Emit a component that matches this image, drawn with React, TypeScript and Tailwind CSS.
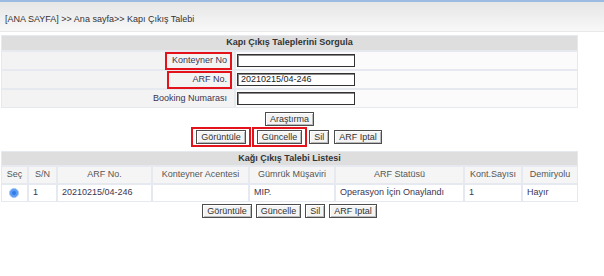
import React from "react";

const font = { fontFamily: '"Liberation Sans", Arial, sans-serif' };

function Btn({ children }: { children: React.ReactNode }) {
  return (
    <button
      type="button"
      className="h-[14px] px-[4px] leading-[12px] text-[9px] text-[#333] bg-[#f4f4f4] border border-[#4d4d4d] shadow-[inset_1px_1px_0_#fff,inset_-1px_-1px_0_#bbb]"
    >
      {children}
    </button>
  );
}

function Boxed({ children }: { children: React.ReactNode }) {
  return (
    <div className="flex items-center justify-center h-[20px] px-[3px] border-2 border-[#e3121b]">
      {children}
    </div>
  );
}

function Field({ value = "" }: { value?: string }) {
  return (
    <div className="w-[118px] h-[13px] border border-[#333] shadow-[inset_1px_1px_0_#888] bg-white pl-[3px] text-[9px] leading-[11px] text-[#222]">
      {value}
    </div>
  );
}

const searchRows = [
  { label: "Konteyner No", value: "", boxed: true },
  { label: "ARF No.", value: "20210215/04-246", boxed: true },
  { label: "Booking Numarası", value: "", boxed: false },
];

const columns = [
  { title: "Seç", w: "w-[25px]" },
  { title: "S/N", w: "w-[27px]" },
  { title: "ARF No.", w: "w-[93px]" },
  { title: "Konteyner Acentesi", w: "w-[95px]" },
  { title: "Gümrük Müşaviri", w: "w-[84px]" },
  { title: "ARF Statüsü", w: "w-[127px]" },
  { title: "Kont.Sayısı", w: "w-[56px]" },
  { title: "Demiryolu", w: "w-[54px]" },
];

const row = ["", "1", "20210215/04-246", "", "MIP.", "Operasyon İçin Onaylandı", "1", "Hayır"];

export default function App() {
  return (
    <div className="w-[604px] h-[276px] bg-white overflow-hidden" style={font}>
      {/* breadcrumb bar */}
      <div className="h-[32px] border-t-2 border-[#9bbbe3] bg-gradient-to-b from-[#e6e6e6] to-[#f8f8f8] border-b border-b-[#e9e9e9] flex items-end pb-[5px] pl-[5px]">
        <span className="text-[9px] text-[#333]">[ANA SAYFA] &gt;&gt; Ana sayfa&gt;&gt; Kapı Çıkış Talebi</span>
      </div>

      <div className="ml-[1px] w-[577px]">
        {/* search table */}
        <div className="mt-[3px] bg-[#e6e9ef] p-[1px] flex flex-col gap-[2px]">
          <div className="h-[14px] bg-[#dedede] flex items-center justify-center text-[9px] font-bold text-[#333]">
            Kapı Çıkış Taleplerini Sorgula
          </div>
          {searchRows.map((r) => (
            <div key={r.label} className="flex gap-[2px] h-[17px]">
              <div className="w-[232px] bg-[#f3f3f3] flex items-center justify-end pr-[2px]">
                <div
                  className={
                    r.boxed
                      ? "h-[18px] pl-[5px] pr-[3px] border-2 border-[#e3121b] flex items-center text-[9px] text-[#3b3552] min-w-[65px] justify-end"
                      : "pr-[5px] text-[9px] text-[#3b3552]"
                  }
                >
                  {r.label}
                </div>
              </div>
              <div className="flex-1 bg-[#fbfbfb] flex items-center pl-[1px]">
                <Field value={r.value} />
              </div>
            </div>
          ))}
        </div>

        {/* search button */}
        <div className="flex justify-center mt-[4px]">
          <Btn>Araştırma</Btn>
        </div>

        {/* action buttons */}
        <div className="flex justify-center items-center mt-[1px] pr-[6px]">
          <Boxed>
            <Btn>Görüntüle</Btn>
          </Boxed>
          <div className="w-[1px]" />
          <Boxed>
            <Btn>Güncelle</Btn>
          </Boxed>
          <div className="w-[2px]" />
          <Btn>Sil</Btn>
          <div className="w-[5px]" />
          <Btn>ARF Iptal</Btn>
        </div>

        {/* list table */}
        <div className="mt-[4px] bg-[#e6e9ef] p-[1px] flex flex-col gap-[2px]">
          <div className="h-[13px] bg-[#dedede] flex items-center justify-center text-[9px] font-bold text-[#333]">
            Kağı Çıkış Talebi Listesi
          </div>
          <div className="flex gap-[2px] h-[16px]">
            {columns.map((c) => (
              <div
                key={c.title}
                className={`${c.w} shrink-0 bg-[#f5f5f5] flex items-center justify-center text-[9px] text-[#555]`}
              >
                {c.title}
              </div>
            ))}
          </div>
          <div className="flex gap-[2px] h-[16px]">
            {columns.map((c, i) => (
              <div
                key={c.title}
                className={`${c.w} shrink-0 bg-white flex items-center pl-[4px] text-[9px] text-[#3b3552]`}
              >
                {i === 0 ? (
                  <span className="ml-[3px] w-[10px] h-[10px] rounded-full border border-[#a9c8f2] bg-[#2f7be8] shadow-[inset_0_0_0_2px_#5b9cf5]" />
                ) : (
                  row[i]
                )}
              </div>
            ))}
          </div>
        </div>

        <div className="flex justify-center items-center gap-[4px] mt-[2px]">
          <Btn>Görüntüle</Btn>
          <Btn>Güncelle</Btn>
          <Btn>Sil</Btn>
          <Btn>ARF Iptal</Btn>
        </div>
      </div>
    </div>
  );
}
